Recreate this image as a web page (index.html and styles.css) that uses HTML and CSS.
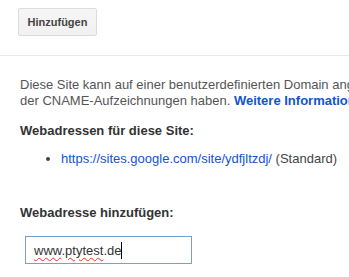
FILE: index.html
```html
<!DOCTYPE html>
<html lang="de">
<head>
    <meta charset="UTF-8">
    <meta name="viewport" content="width=device-width, initial-scale=1.0">
    <title>Webadressen verwalten</title>
    <link rel="stylesheet" href="styles.css">
</head>
<body>

    <div class="toolbar">
        <button class="btn">Hinzufügen</button>
    </div>

    <div class="content">
        <p class="intro">
            Diese Site kann auf einer benutzerdefinierten Domain angezeigt werden, wenn Sie Zugriff auf die Verwaltung<br>
            der CNAME-Aufzeichnungen haben. <a href="#" class="more">Weitere Informationen</a>
        </p>

        <h4>Webadressen für diese Site:</h4>
        <ul class="urls">
            <li><a href="#">https://sites.google.com/site/ydfjltzdj/</a> (Standard)</li>
        </ul>

        <h4 class="add-title">Webadresse hinzufügen:</h4>
        <div class="field"><span class="typo">www</span>.<span class="typo">ptytest</span>.de<span class="caret"></span></div>
    </div>

</body>
</html>
```

FILE: styles.css
```css
/* Grundlayout */
body {
    margin: 0;
    font-family: "Liberation Sans", Arial, sans-serif;
    font-size: 13px;
    color: #444;
    background: #fff;
    overflow: hidden;
}

.toolbar {
    padding: 8px 0 19px 18px;
    border-bottom: 1px solid #ebebeb;
}

.btn {
    height: 28px;
    width: 79px;
    padding: 0;
    font-family: inherit;
    font-size: 11px;
    font-weight: bold;
    color: #444;
    background: linear-gradient(#f5f5f5, #f1f1f1);
    border: 1px solid #dcdcdc;
    border-radius: 2px;
    display: block;
}

.content {
    padding-left: 20px;
}

.intro {
    margin: 21px 0 0;
    line-height: 16px;
    color: #555;
    white-space: nowrap;
}

a {
    color: #15c;
    text-decoration: none;
}

.more {
    font-weight: bold;
}

h4 {
    margin: 14px 0 0;
    font-size: 13px;
    line-height: 16px;
    color: #333;
}

.urls {
    margin: 12px 0 0;
    padding-left: 41px;
    line-height: 16px;
}

.add-title {
    margin-top: 38px;
}

.field {
    margin: 15px 0 0 5px;
    width: 157px;
    height: 26px;
    padding-left: 8px;
    border: 1px solid #7b9dd2;
    line-height: 28px;
    color: #333;
    box-sizing: content-box;
}

.typo {
    text-decoration: underline wavy #e33;
    text-decoration-thickness: 1px;
    text-underline-offset: 2px;
}

.caret {
    display: inline-block;
    width: 1px;
    height: 17px;
    background: #000;
    vertical-align: -4px;
}
```
